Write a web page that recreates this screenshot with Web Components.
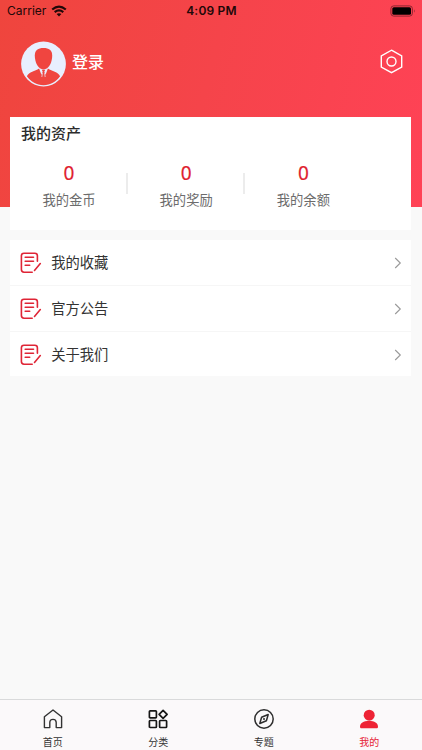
<!DOCTYPE html>
<html lang="zh-CN"><head><meta charset="utf-8"><title>我的</title>
<style>
html,body{margin:0;height:100%}
body{font-family:Inter,"Noto Sans CJK SC",sans-serif;background:#f9f9f9;overflow:hidden}
</style></head><body>
<profile-page></profile-page>
<script>
const define=(name,css,html)=>customElements.define(name,class extends HTMLElement{
  constructor(){super();this.attachShadow({mode:'open'}).innerHTML=`<style>:host,*{box-sizing:border-box}svg{display:block;flex:none}${css}</style>${html}`}
});

define('status-bar',`
:host{display:grid;grid-template-columns:1fr auto 1fr;align-items:center;height:22px;padding:0 6px 0 7px;color:#210808;font-size:12px;line-height:22px}
.l{display:flex;align-items:center;gap:5px}
b{font-weight:600;font-size:12px;letter-spacing:.2px}
.r{justify-self:end}`,
`<span class="l"><span>Carrier</span><svg width="16" height="12" viewBox="0 0 16 12"><g fill="none" stroke="#210808" stroke-width="2.2"><path d="M1.2 4.5Q8-1.2 14.8 4.5"/><path d="M3.7 7.2Q8 3.7 12.3 7.2"/></g><path d="M5.6 9.1Q8 7.2 10.4 9.1L8 11.6Z" fill="#210808"/></svg></span>
<b>4:09 PM</b>
<svg class="r" width="26" height="12" viewBox="0 0 26 12"><rect x=".9" y=".9" width="21.5" height="10.2" rx="2.8" fill="none" stroke="#8c2530"/><rect x="2.3" y="2.2" width="18.7" height="7.6" rx="1.5" fill="#000"/><path d="M24 4.2Q25.6 6 24 7.8Z" fill="#8c2530"/></svg>`);

define('user-bar',`
:host{display:flex;align-items:center;height:65px;padding:18px 19.5px 0 20px;color:#fff}
.n{font-size:16px;font-weight:500;line-height:20px;margin-left:6px;flex:1;position:relative;top:-2px}
.g{position:relative;top:-2.5px}`,
`<svg width="46" height="46" viewBox="-.5 0 46 46"><circle cx="23" cy="23" r="22.4" fill="#e8efff"/><path d="M14.3 14.5C14.3 9.2 17.6 7 23 7s8.7 2.2 8.7 7.5c0 7-3.3 13.9-8.7 13.9s-8.7-6.9-8.7-13.9Z" fill="#f04540"/><path d="M6.4 35.3C8.5 30.8 14.5 30.2 18.6 27.6L20.9 33.8 22.2 30.6 21.2 28.8H24.8L23.8 30.6 25.1 33.8 27.4 27.6C31.5 30.2 37.5 30.8 39.6 35.3 35.5 41 30 44.2 23 44.2S10.5 41 6.4 35.3Z" fill="#f04540"/><path d="m22 31.8-.7 4.2M24 31.8l.7 4.2" stroke="#e8efff" stroke-width=".7"/></svg>
<span class="n">登录</span>
<svg class="g" width="23" height="25" viewBox="0 0 23 25"><g fill="none" stroke="#fff" stroke-width="1.4"><path d="M11.5 1.2 21.7 6.8V18L11.5 23.7 1.3 18V6.8Z"/><circle cx="11.5" cy="12.5" r="4.5"/></g></svg>`);

define('asset-item',`
:host{display:flex;flex-direction:column;align-items:center;width:117.2px;position:relative}
.v{font-family:"Noto Sans",sans-serif;font-size:19px;font-weight:400;line-height:24px;color:#e0222f;-webkit-text-stroke:.2px #e0222f}
.t{font-size:13.3px;line-height:20px;color:#6c6c6c;margin-top:5px}
:host([divided])::after{content:"";position:absolute;right:0;top:12px;width:1.5px;height:21px;background:#ececec}`,
`<span class="v"><slot name="value"></slot></span><span class="t"><slot></slot></span>`);

define('asset-card',`
:host{display:block;height:112.3px;margin:0 10.6px 0 10.4px;background:#fff;color:#2c2c2c}
h2{margin:0;padding:7px 0 0 10.5px;font-size:15px;line-height:20px;font-weight:500}
.row{display:flex;padding-top:17px}`,
`<h2>我的资产</h2><div class="row"><asset-item divided><span slot="value">0</span>我的金币</asset-item><asset-item divided><span slot="value">0</span>我的奖励</asset-item><asset-item><span slot="value">0</span>我的余额</asset-item></div>`);

define('menu-row',`
:host{display:flex;align-items:center;height:46px;padding:1px 9.3px 0;border-bottom:1px solid #f6f6f6;background:#fff;font-size:14.3px;line-height:20px;color:#333}
:host(:first-child){height:45.5px}
:host(:last-child){border:0;height:44.5px}
.t{flex:1;margin-left:9.5px}`,
`<svg width="22" height="22" viewBox="0 0 22 22"><g fill="none" stroke="#df2536" stroke-width="1.6" stroke-linecap="round" stroke-linejoin="round"><path d="M17.4 9.3V3.8a2.6 2.6 0 0 0-2.6-2.6H4A2.6 2.6 0 0 0 1.4 3.8v13.8A2.6 2.6 0 0 0 4 20.2h8.2"/><path d="M5.2 5.2h8.3M5.2 9.2h8.3M5.2 13.2h4.5M14.5 18.5l5.8-7"/></g></svg>
<span class="t"><slot></slot></span>
<svg width="8" height="12" viewBox="0 0 8 12"><path d="M1.2 1 6.3 6 1.2 11" fill="none" stroke="#999" stroke-width="1.1"/></svg>`);

define('menu-list',`:host{display:block;margin:10.4px 10.6px 0 10.4px}`,
`<menu-row>我的收藏</menu-row><menu-row>官方公告</menu-row><menu-row>关于我们</menu-row>`);

define('tab-item',`
:host{flex:1;display:flex;flex-direction:column;align-items:center;padding-top:9px;color:#333;font-size:10px;line-height:14px}
:host([active]){color:#e62436}
.t{margin-top:5.5px}`,
`<slot name="icon"></slot><span class="t"><slot></slot></span>`);

define('tab-bar',`
:host{display:flex;height:51px;background:#fbf9fa;border-top:1px solid #d9dadb}`,
`<tab-item><svg slot="icon" width="20" height="20" viewBox="0 0 20 20"><path d="M1.4 7.7 10 1l8.6 6.7V18.6h-5.4v-5a3.2 3.2 0 0 0-6.4 0v5H1.4Z" fill="none" stroke="#333" stroke-width="1.4" stroke-linejoin="round"/></svg>首页</tab-item>
<tab-item><svg slot="icon" width="20" height="20" viewBox="0 0 20 20"><g fill="none" stroke="#161616" stroke-width="1.7" stroke-linejoin="round"><rect x="1.4" y="1.8" width="7" height="7" rx=".8"/><rect x="1.4" y="11.5" width="7" height="7" rx=".8"/><rect x="11.6" y="11.5" width="7" height="7" rx=".8"/><path d="m15.1 1.3 4 4-4 4-4-4Z"/></g></svg>分类</tab-item>
<tab-item><svg slot="icon" width="20" height="20" viewBox="0 0 20 20"><g fill="none" stroke="#2e2e2e" stroke-width="1.5" stroke-linejoin="round"><circle cx="10" cy="10" r="9.2"/><path d="m14.2 5.5-1.8 6.2-6.6 2.8 1.8-6.2Z"/></g><circle cx="10" cy="10" r="1" fill="#2e2e2e"/></svg>专题</tab-item>
<tab-item active><svg slot="icon" width="20" height="20" viewBox="0 0 20 20"><g fill="#ee2335"><circle cx="10.2" cy="6.2" r="5.5"/><path d="M1 17.8C1 13.8 4.5 12 10 12s9 1.8 9 5.8c0 1-.6 1.5-1.6 1.5H2.6C1.6 19.3 1 18.8 1 17.8Z"/></g></svg>我的</tab-item>`);

define('profile-page',`
:host{display:flex;flex-direction:column;height:100vh;background:linear-gradient(105deg,#ef453d 0,#f5444a 48%,#ff4256 100%) 0 0/100% 207px no-repeat,#f9f9f9}
asset-card{margin-top:30.3px}
main{flex:1;display:flow-root}`,
`<status-bar></status-bar><main><user-bar></user-bar><asset-card></asset-card><menu-list></menu-list></main><tab-bar></tab-bar>`);
</script></body></html>
